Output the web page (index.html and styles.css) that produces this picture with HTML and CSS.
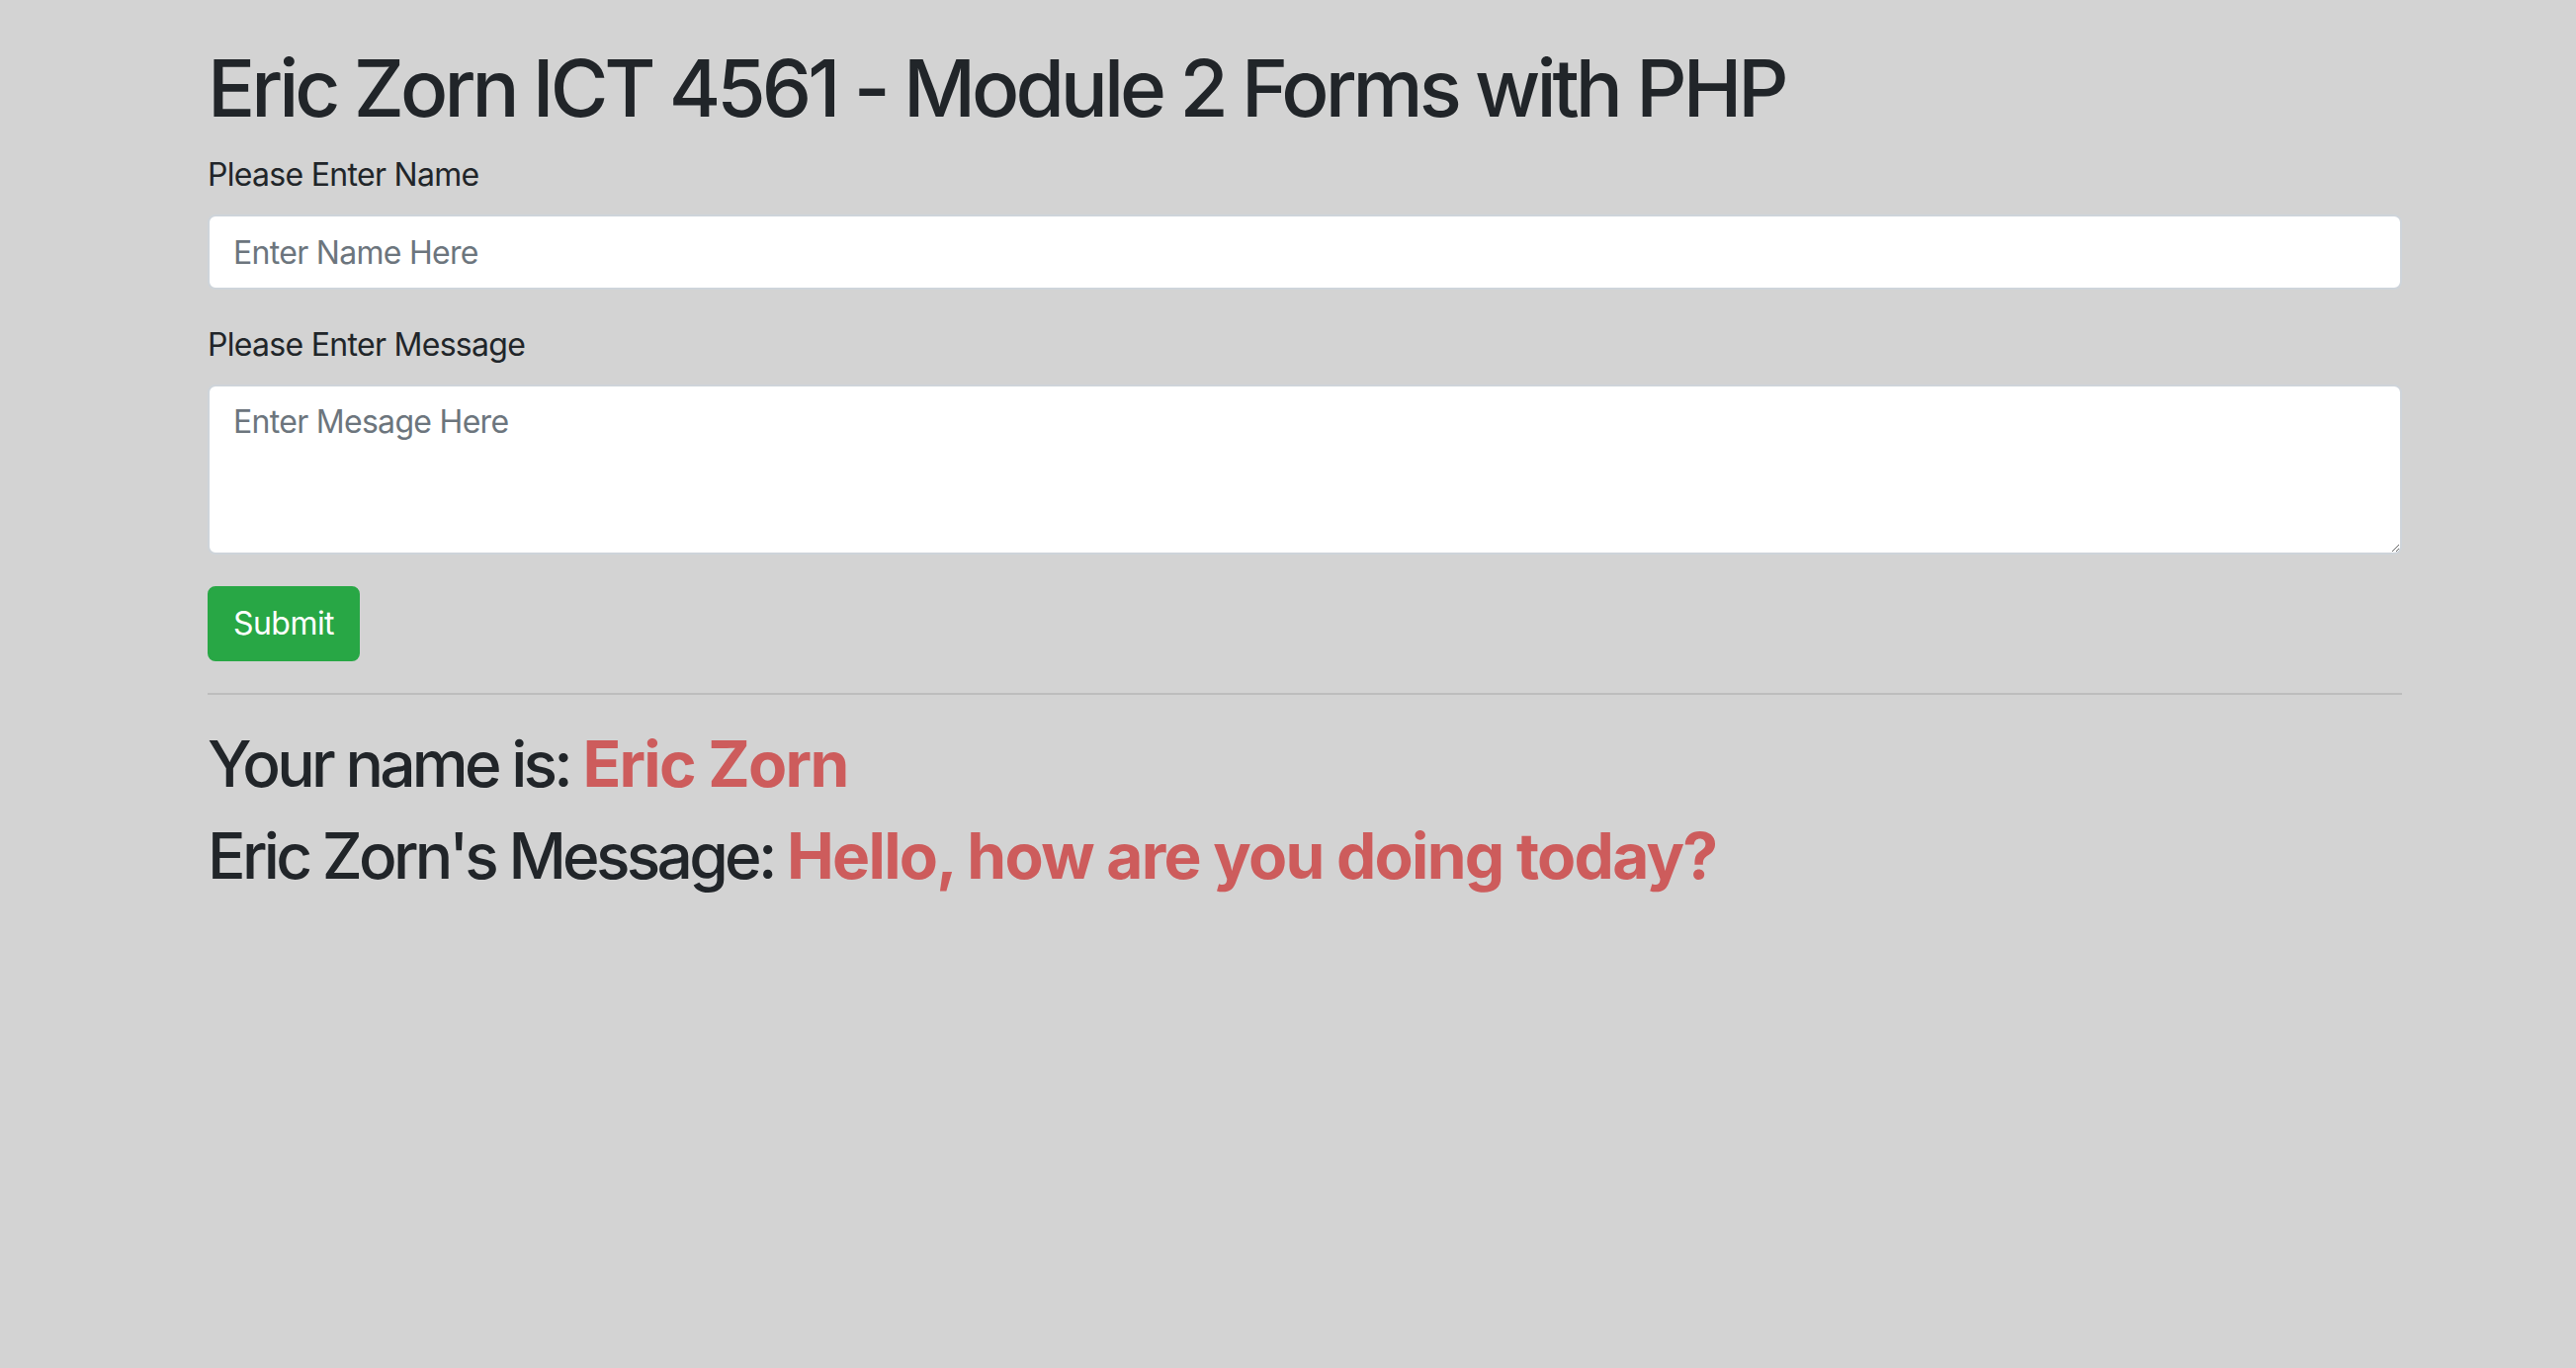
FILE: index.html
```html
<!DOCTYPE html>
<html lang="en">
<head>
<meta charset="utf-8">
<title>Module 2 Forms with PHP</title>
<link rel="stylesheet" href="styles.css">
</head>
<body>
<div class="container">
  <h1 class="title">Eric Zorn ICT 4561 - Module 2 Forms with PHP</h1>
  <form class="form">
    <div class="form-group">
      <label class="label" for="name">Please Enter Name</label>
      <input class="control" id="name" type="text" placeholder="Enter Name Here">
    </div>
    <div class="form-group">
      <label class="label" for="msg">Please Enter Message</label>
      <textarea class="control area" id="msg" rows="3" placeholder="Enter Mesage Here"></textarea>
    </div>
    <button class="btn-success" type="button">Submit</button>
  </form>
  <hr class="rule">
  <h2 class="result">Your name is: <span class="value">Eric Zorn</span></h2>
  <h2 class="result">Eric Zorn's Message: <span class="value">Hello, how are you doing today?</span></h2>
</div>
</body>
</html>
```
FILE: styles.css
```css
html, body {
  margin: 0;
  padding: 0;
}
body {
  background: #d3d3d3;
  color: #212529;
  font-family: Inter, "Noto Sans", "Liberation Sans", sans-serif;
  font-size: 32px;
  line-height: 1.5;
  letter-spacing: -0.022em;
  min-height: 1384px;
}
.container {
  width: 2220px;
  margin-left: 210px;
  padding-top: 41px;
}
.title {
  font-size: 80px;
  font-weight: 500;
  line-height: 1.2;
  letter-spacing: -0.05em;
  margin: 0 0 16px;
}
.form-group {
  margin-bottom: 32px;
}
.label {
  display: inline-block;
  margin-bottom: 16px;
}
.control {
  display: block;
  box-sizing: border-box;
  width: 100%;
  height: 76px;
  padding: 12px 24px;
  font-family: inherit;
  font-size: 32px;
  line-height: 1.5;
  letter-spacing: inherit;
  color: #495057;
  background: #fff;
  border: 2px solid #ced4da;
  border-radius: 8px;
  margin: 0;
}
.control::placeholder {
  color: #6c757d;
  opacity: 1;
}
.area {
  height: 172px;
  resize: vertical;
}
.btn-success {
  display: inline-block;
  box-sizing: border-box;
  height: 76px;
  padding: 12px 24px;
  font-family: inherit;
  font-size: 32px;
  font-weight: 400;
  line-height: 1.5;
  letter-spacing: -0.017em;
  color: #fff;
  background: #28a745;
  border: 2px solid #28a745;
  border-radius: 8px;
  margin: 0;
  vertical-align: top;
}
.rule {
  border: 0;
  border-top: 2px solid rgba(0, 0, 0, 0.1);
  margin: 32px 0;
  height: 0;
}
.result {
  font-size: 64px;
  font-weight: 500;
  line-height: 1.2;
  letter-spacing: -0.058em;
  margin: 0 0 16px;
}
.value {
  color: #cd5c5c;
  font-weight: 700;
  letter-spacing: -0.027em;
}
```
